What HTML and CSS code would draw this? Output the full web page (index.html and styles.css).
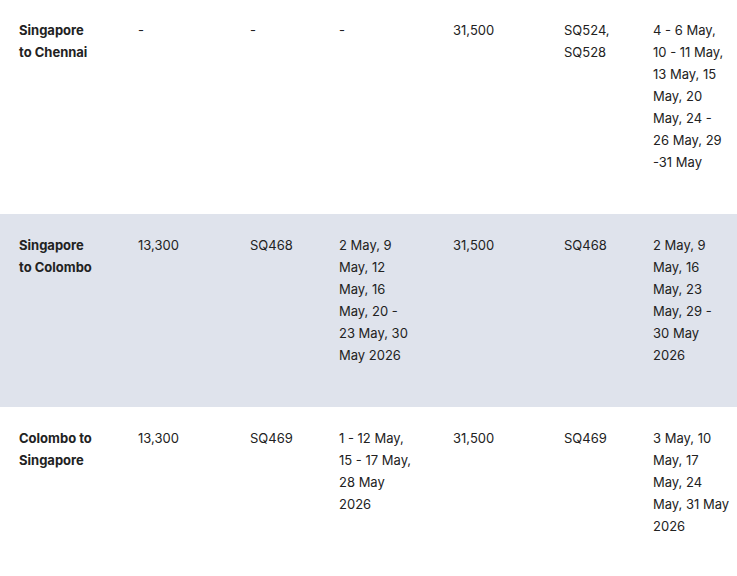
FILE: index.html
```html
<!DOCTYPE html>
<html lang="en">
<head>
<meta charset="utf-8">
<title>Fares</title>
<link rel="stylesheet" href="styles.css">
</head>
<body>
<table class="fares">
  <colgroup>
    <col class="c1"><col class="c2"><col class="c3"><col class="c4"><col class="c5"><col class="c6"><col class="c7">
  </colgroup>
  <tbody>
    <tr>
      <th class="route">Singapore to Chennai</th>
      <td>-</td>
      <td>-</td>
      <td class="dates">-</td>
      <td>31,500</td>
      <td class="flights">SQ524, SQ528</td>
      <td class="dates2">4 - 6 May, 10 - 11 May, 13 May, 15 May, 20 May, 24 - 26 May, 29 -31 May</td>
    </tr>
    <tr class="alt">
      <th class="route">Singapore to Colombo</th>
      <td>13,300</td>
      <td>SQ468</td>
      <td class="dates">2 May, 9 May, 12 May, 16 May, 20 - 23 May, 30 May 2026</td>
      <td>31,500</td>
      <td class="flights">SQ468</td>
      <td class="dates2">2 May, 9 May, 16 May, 23 May, 29 - 30 May 2026</td>
    </tr>
    <tr>
      <th class="route">Colombo to Singapore</th>
      <td>13,300</td>
      <td>SQ469</td>
      <td class="dates">1 - 12 May, 15 - 17 May, 28 May 2026</td>
      <td>31,500</td>
      <td class="flights">SQ469</td>
      <td class="dates2">3 May, 10 May, 17 May, 24 May, 31 May 2026</td>
    </tr>
  </tbody>
</table>
</body>
</html>
```
FILE: styles.css
```css
html, body {
  margin: 0;
  padding: 0;
  background: #ffffff;
}
body {
  font-family: "Inter", "Liberation Sans", sans-serif;
  font-size: 13px;
  line-height: 22px;
  color: #222222;
  overflow: hidden;
}
.fares {
  width: 737px;
  table-layout: fixed;
  border-collapse: collapse;
  margin-top: -1px;
}
.c1 { width: 138px; }
.c2 { width: 112px; }
.c3 { width: 89px; }
.c4 { width: 114px; }
.c5 { width: 111px; }
.c6 { width: 89px; }
.c7 { width: 84px; }
.fares th,
.fares td {
  vertical-align: top;
  text-align: left;
  padding: 20px 10px 41px 0;
  font-weight: 400;
}
.fares th.route {
  font-weight: 700;
  padding-left: 19px;
  padding-right: 40px;
}
.fares td.dates { padding-right: 39px; }
.fares td.flights { padding-right: 19px; }
.fares td.dates2 { padding-right: 7px; }
.alt { background: #dfe3ec; }
```
